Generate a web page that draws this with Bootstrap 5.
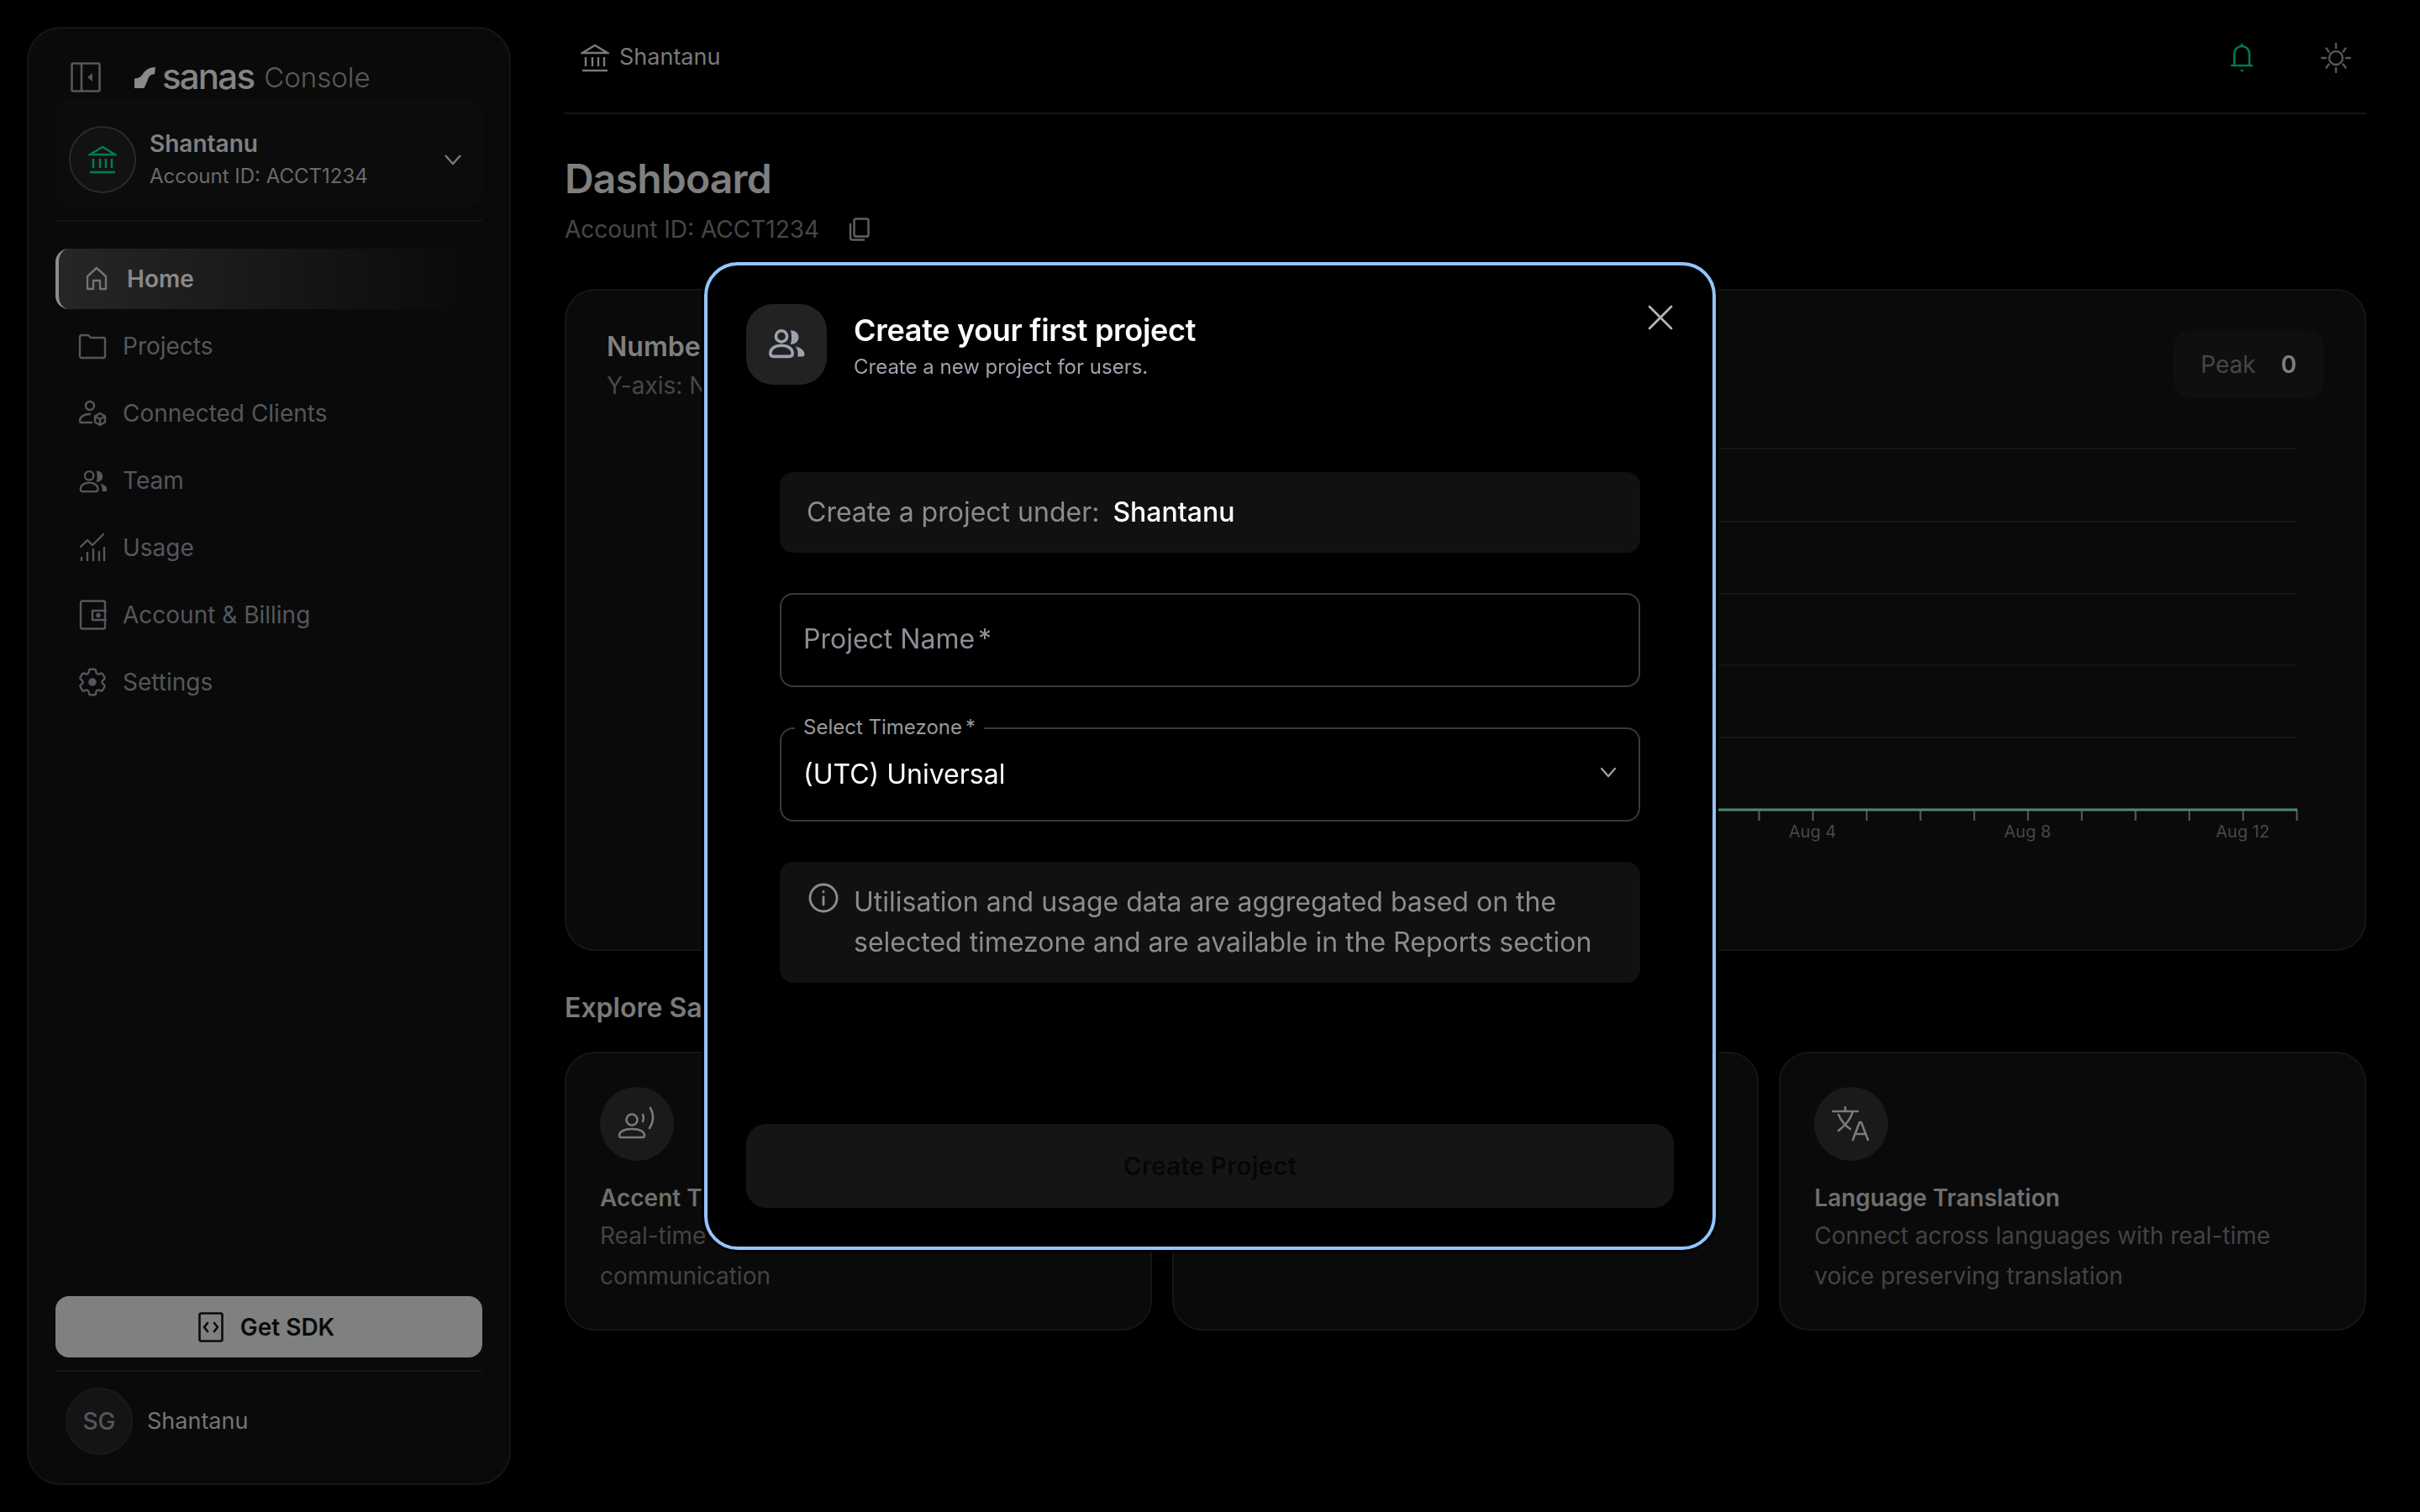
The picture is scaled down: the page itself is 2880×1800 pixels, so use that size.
<!DOCTYPE html>
<html lang="en">
<head>
  <meta charset="UTF-8">
  <title>Dashboard - Sanas Console</title>
  <link href="https://cdn.jsdelivr.net/npm/bootstrap@5.3.0/dist/css/bootstrap.min.css" rel="stylesheet">
  <style>
    body {
      background: #000;
      font-family: Inter, "Liberation Sans", sans-serif;
      color: #808080;
      width: 2880px;
      height: 1800px;
      overflow: hidden;
    }

    svg { display: block; flex: none; fill: none; }

    .sidebar {
      width: 576px;
      height: 1736px;
      margin: 32px 0 0 32px;
      padding: 40px 32px 34px;
      background: #0a0a0a;
      border: 2px solid #151515;
      border-radius: 40px;
      flex: none;
    }
    .side-head { height: 36px; padding-left: 18px; }
    .logo-mark { margin-left: 40px; }
    .logo-word { font-size: 42px; font-weight: 500; letter-spacing: -1.8px; line-height: 36px; color: #858585; margin-left: 8px; margin-top: -2px; }
    .logo-sub { font-size: 33px; font-weight: 300; line-height: 36px; color: #5a5a5a; margin-left: 12px; }
    .acct-box { height: 128px; margin-top: 8px; padding: 16px 16px 0; background: #0c0c0c; border-radius: 16px; }
    .acct-avatar { width: 80px; height: 80px; border: 2px solid #2a2a2a; background: #121212; border-radius: 50%; }
    .acct-name { font-size: 28px; font-weight: 600; line-height: 36px; color: #808080; }
    .acct-id { font-size: 24px; line-height: 36px; color: #6a6a6a; margin-top: 3px; }
    .side-rule { height: 2px; background: #151515; margin: 16px 0 32px; opacity: 1; border: 0; }

    .side-nav { gap: 8px; }
    .side-nav .nav-link {
      height: 72px;
      padding: 0 0 0 27px;
      gap: 19px;
      font-size: 28px;
      font-weight: 400;
      color: #54575d;
    }
    .side-nav .nav-link svg { width: 34px; height: 36px; stroke: #54575d; stroke-width: 2.4; stroke-linecap: round; stroke-linejoin: round; }
    .side-nav .nav-link.active {
      padding-left: 31px;
      gap: 22px;
      font-weight: 600;
      color: #8a8a8a;
      background: linear-gradient(to right, #262626, #0a0a0a 97%);
      border-left: 4px solid #8c8c8c;
      border-radius: 16px;
    }
    .side-nav .nav-link.active svg { width: 28px; height: 30px; stroke: #737373; }
    .side-nav .nav-link .gear { stroke-width: 1.4; }

    .sdk-btn {
      height: 73px;
      padding-right: 18px;
      gap: 20px;
      background: #808080;
      border: 0;
      border-radius: 16px;
      font-size: 28px;
      font-weight: 600;
      color: #0a0a0a;
    }
    .side-rule-2 { height: 2px; background: #151515; margin: 15px 0 19px; opacity: 1; border: 0; }
    .user-row { padding-left: 12px; gap: 17px; }
    .user-avatar { width: 80px; height: 80px; background: #141414; border: 2px solid #1a1a1a; border-radius: 50%; font-size: 28px; font-weight: 500; color: #54575d; }
    .user-name { font-size: 27px; color: #757575; }

    .main { width: 2272px; padding: 0 64px; flex: none; }
    .topbar { height: 136px; border-bottom: 2px solid #151515; padding: 3px 18px 0 19px; }
    .top-icons { gap: 80px; }
    .crumb { gap: 12px; font-size: 27px; color: #7a7a7a; }
    .page-title { font-size: 48px; font-weight: 600; line-height: 58px; letter-spacing: -.8px; color: #7f7f7f; margin: 48px 0 0; }
    .page-sub { font-size: 28px; line-height: 40px; color: #474747; margin-top: 11px; gap: 35px; }

    .panel { background: #0a0a0a; border: 2px solid #151515; border-radius: 36px; }
    .chart-panel { height: 788px; margin-top: 51px; padding: 48px; }
    .chart-title { font-size: 32px; font-weight: 600; line-height: 38px; color: #808080; }
    .chart-sub { font-size: 28px; line-height: 36px; color: #474747; margin-top: 9px; }
    .peak { width: 180px; height: 79px; padding: 0 33px; background: #0f0f0f; border-radius: 20px; font-size: 28px; color: #474747; }
    .peak b { font-weight: 600; color: #808080; }
    .chart { margin-top: 13px; }
    .chart text { font-family: Inter, "Liberation Sans", sans-serif; font-size: 20px; fill: #474747; text-anchor: middle; }

    .explore { font-size: 32px; font-weight: 600; line-height: 40px; color: #7a7a7a; margin: 48px 0 32px; }
    .feature-row { --bs-gutter-x: 24px; --bs-gutter-y: 0; }
    .feature { height: 332px; padding: 40px 40px 0; }
    .feature-icon { width: 88px; height: 88px; background: #1a1a1a; border-radius: 50%; }
    .feature-title { font-size: 28px; font-weight: 600; line-height: 40px; color: #6f6f6f; margin-top: 24px; }
    .feature-text { font-size: 28px; line-height: 48px; color: #434343; margin-top: 1px; }

    .create-modal {
      width: 1204px;
      height: 1176px;
      padding: 46px;
      background: #000;
      border: 4px solid #93c5fd;
      border-radius: 40px;
      box-shadow: 0 0 0 3px #000;
    }
    .tile { width: 96px; height: 96px; background: #222; border-radius: 32px; }
    .head-text { margin-left: 32px; }
    .modal-title-text { font-size: 36px; font-weight: 600; line-height: 44px; letter-spacing: -.3px; color: #fff; margin-top: 9px; }
    .modal-sub { font-size: 24px; line-height: 32px; color: #9ca3af; margin-top: 6px; }
    .modal-x { top: 40px; right: 40px; width: 44px; height: 44px; padding: 0; background: none; border: 0; }
    .modal-body-wrap { margin: 104px 40px 0; }
    .under-box { height: 96px; padding: 0 32px; gap: 16px; background: #111; border-radius: 16px; font-size: 32px; color: #8c8c8c; }
    .under-box b { font-weight: 500; color: #fff; }
    .field { margin-top: 48px; height: 112px; }
    .field .form-control, .field .form-select {
      height: 112px;
      padding: 0 26px;
      background: #000;
      background-image: none;
      border: 2px solid #3a3a3a;
      border-radius: 16px;
      font-size: 32px;
      color: #fff;
      box-shadow: none;
    }
    .field-label { top: 35px; left: 28px; font-size: 32px; line-height: 40px; color: #8b8f97; pointer-events: none; }
    .field-legend { top: -16px; left: 18px; padding: 0 10px; background: #000; font-size: 24px; line-height: 32px; color: #9a9a9a; }
    .req { margin-left: 4px; }
    .field-chev { top: 46px; right: 28px; pointer-events: none; }
    .info-box { height: 144px; margin-top: 48px; padding: 24px 32px 0 34px; gap: 18px; background: #111; border-radius: 16px; font-size: 32px; line-height: 48px; color: #8c8c8c; }
    .info-box svg { margin-top: 1px; }
    .create-btn, .create-btn:disabled {
      height: 100px;
      margin-top: auto;
      background: #151515;
      border: 0;
      border-radius: 24px;
      font-size: 30px;
      font-weight: 600;
      color: #060606;
      opacity: 1;
    }
  </style>
</head>
<body>

<svg width="0" height="0" class="position-absolute">
  <symbol id="bank" viewBox="0 0 34 34">
    <path d="M2 11 17 2l15 9z"/><path d="M6 16v11M14 16v11M21 16v11M28 16v11" /><path d="M2 32h30"/>
  </symbol>
  <symbol id="team" viewBox="0 0 36 30">
    <circle cx="13" cy="7" r="5.5"/>
    <path d="M2 24c0-5 5-8 11-8s11 3 11 8c0 2-1 3-3 3H5c-2 0-3-1-3-3z"/>
    <path d="M22 1c5 0 8 3 8 7s-3 7-8 7c.5-2 1-4 1-7s-.5-5-1-7zM27 17c5 1 9 4 9 8 0 1-1 2-2 2h-5c1-4 0-7-2-10z" fill="currentColor" stroke="none"/>
  </symbol>
</svg>

<div class="d-flex">
  <aside class="sidebar d-flex flex-column">
    <div class="side-head d-flex align-items-center">
      <svg width="36" height="36" viewBox="0 0 36 36" stroke="#54575d" stroke-width="2.6"><rect x="1.5" y="1.5" width="33" height="33" rx="1.5"/><path d="M13 2v32"/><path d="M26 13v10l-6-5z" fill="#54575d" stroke="none"/></svg>
      <svg class="logo-mark" width="25" height="25" viewBox="0 0 24 24"><path d="M0 24V13c6 0 8-3 10-6 3-4 7-7 14-7l-1 8c-5 0-7 3-8 7l-4 9z" fill="#8a8a8a"/></svg>
      <span class="logo-word">sanas</span>
      <span class="logo-sub">Console</span>
    </div>

    <div class="acct-box d-flex align-items-center">
      <div class="acct-avatar d-flex align-items-center justify-content-center">
        <svg width="34" height="34" stroke="#047a4d" stroke-width="2.6"><use href="#bank"/></svg>
      </div>
      <div class="ms-3 flex-grow-1">
        <div class="acct-name">Shantanu</div>
        <div class="acct-id">Account ID: ACCT1234</div>
      </div>
      <svg class="me-2" width="22" height="14" viewBox="0 0 22 14" stroke="#7a7a7a" stroke-width="2.4"><path d="M2 2l9 10 9-10"/></svg>
    </div>
    <hr class="side-rule">

    <nav class="nav flex-column side-nav">
      <a class="nav-link active d-flex align-items-center" href="#">
        <svg viewBox="0 0 28 30"><path d="M3 27V12L14 2l11 10v15h-7V17h-8v10z"/></svg>Home
      </a>
      <a class="nav-link d-flex align-items-center" href="#">
        <svg viewBox="0 0 34 36"><path d="M2 7c0-1 1-2 2-2h8l3 3h15c1 0 2 1 2 2v20c0 1-1 2-2 2H4c-1 0-2-1-2-2z"/></svg>Projects
      </a>
      <a class="nav-link d-flex align-items-center" href="#">
        <svg viewBox="0 0 34 36"><circle cx="14" cy="9" r="5"/><path d="M14 19C7 19 2 22 2 27c0 1 1 2 2 2h12"/><path d="M26 18l6 3.500v7L26 32l-6-3.500v-7zM20 21.500l6 3.500 6-3.500M26 25v7"/></svg>Connected Clients
      </a>
      <a class="nav-link d-flex align-items-center" href="#">
        <svg viewBox="-1 -2 38 34" color="#54575d"><use href="#team"/></svg>Team
      </a>
      <a class="nav-link d-flex align-items-center" href="#">
        <svg viewBox="0 0 34 36"><path d="M3 17l8-8 6 6 13-13"/><path d="M4 33v-3M11 33v-9M18 33v-13M25 33v-10M31 33v-15"/></svg>Usage
      </a>
      <a class="nav-link d-flex align-items-center" href="#">
        <svg viewBox="0 0 34 36"><rect x="3" y="1.500" width="29" height="33" rx="2"/><path d="M33 13H17v11h16"/><circle cx="24" cy="18.500" r="1.600" fill="#54575d"/></svg>Account &amp; Billing
      </a>
      <a class="nav-link d-flex align-items-center" href="#">
        <svg class="gear" viewBox="2 2 20 20"><path d="M9.594 3.94c.09-.542.56-.94 1.11-.94h2.593c.55 0 1.02.398 1.11.94l.213 1.281c.063.374.313.686.645.87.074.04.147.083.22.127.325.196.72.257 1.075.124l1.217-.456a1.125 1.125 0 0 1 1.37.49l1.296 2.247a1.125 1.125 0 0 1-.26 1.431l-1.003.827c-.293.241-.438.613-.43.992a7.723 7.723 0 0 1 0 .255c-.008.378.137.75.43.991l1.004.827c.424.35.534.955.26 1.43l-1.298 2.247a1.125 1.125 0 0 1-1.369.491l-1.217-.456c-.355-.133-.75-.072-1.076.124a6.47 6.47 0 0 1-.22.128c-.331.183-.581.495-.644.869l-.213 1.281c-.09.543-.56.94-1.11.94h-2.594c-.55 0-1.019-.398-1.11-.94l-.213-1.281c-.062-.374-.312-.686-.644-.87a6.52 6.52 0 0 1-.22-.127c-.325-.196-.72-.257-1.076-.124l-1.217.456a1.125 1.125 0 0 1-1.369-.49l-1.297-2.247a1.125 1.125 0 0 1 .26-1.431l1.004-.827c.292-.24.437-.613.43-.991a6.932 6.932 0 0 1 0-.255c.007-.38-.138-.751-.43-.992l-1.004-.827a1.125 1.125 0 0 1-.26-1.43l1.297-2.247a1.125 1.125 0 0 1 1.37-.491l1.216.456c.356.133.751.072 1.076-.124.072-.044.146-.086.22-.128.332-.183.582-.495.644-.869l.214-1.28Z"/><circle cx="12" cy="12" r="2.800" fill="#54575d" stroke="none"/></svg>Settings
      </a>
    </nav>

    <button class="btn sdk-btn mt-auto d-flex align-items-center justify-content-center w-100">
      <svg width="30" height="36" viewBox="0 0 30 36" stroke="#0a0a0a" stroke-width="2.6" stroke-linecap="round" stroke-linejoin="round"><rect x="1.500" y="1.500" width="27" height="33" rx="2"/><path d="M11 13l-4 5 4 5M19 13l4 5-4 5"/></svg>
      Get SDK
    </button>
    <hr class="side-rule-2">
    <div class="user-row d-flex align-items-center">
      <div class="user-avatar d-flex align-items-center justify-content-center">SG</div>
      <span class="user-name">Shantanu</span>
    </div>
  </aside>

  <main class="main">
    <header class="topbar d-flex align-items-center">
      <div class="crumb d-flex align-items-center">
        <svg width="34" height="34" stroke="#7a7a7a" stroke-width="2.400"><use href="#bank"/></svg>
        Shantanu
      </div>
      <div class="top-icons ms-auto d-flex align-items-center">
        <svg width="28" height="36" viewBox="0 0 28 36" stroke="#047a4d" stroke-width="2.600" stroke-linecap="round"><path d="M5 27V13a9 9 0 0 1 18 0v14"/><path d="M2 27h24"/><path d="M14 2v2"/><path d="M11.500 32h5L14 35z" fill="#047a4d" stroke="none"/></svg>
        <svg width="36" height="36" viewBox="0 0 36 36" stroke="#54575d" stroke-width="2.400" stroke-linecap="round"><circle cx="18" cy="18" r="8"/><path d="M18 1v5M18 30v5M1 18h5M30 18h5M6.500 6.500l3 4M29.500 6.500l-3 4M6.500 29.500l3-4M29.500 29.500l-3-4"/></svg>
      </div>
    </header>

    <h1 class="page-title">Dashboard</h1>
    <div class="page-sub d-flex align-items-center">
      <span>Account ID: ACCT1234</span>
      <svg width="26" height="28" viewBox="0 0 26 28" stroke="#5f6166" stroke-width="2.400"><rect x="6.500" y="1.500" width="17" height="21" rx="2"/><path d="M2 7v17c0 1.500 1 2.500 2.500 2.500H19"/></svg>
    </div>

    <section class="panel chart-panel">
      <div class="d-flex justify-content-between align-items-start">
        <div>
          <div class="chart-title">Number of Clients</div>
          <div class="chart-sub">Y-axis: Number</div>
        </div>
        <div class="peak d-flex align-items-center justify-content-between"><span>Peak</span><b>0</b></div>
      </div>
      <svg class="chart" width="2044" height="530" viewBox="0 0 2044 530">
        <g stroke="#151515" stroke-width="2">
          <path d="M180 44H2012M180 131H2012M180 217H2012M180 302H2012M180 388H2012"/>
        </g>
        <g stroke="#5c5c5c" stroke-width="2">
          <path d="M1371.500 474v13M1435.500 474v13M1499.500 474v13M1563.500 474v13M1627.500 474v13M1691.500 474v13M1755.500 474v13M1819.500 474v13M1883.500 474v13M1947.500 474v13M2011.500 474v13"/>
        </g>
        <path d="M1300 474H2012" stroke="#4e8874" stroke-width="3"/>
        <text x="1435" y="507">Aug 4</text>
        <text x="1691" y="507">Aug 8</text>
        <text x="1947" y="507">Aug 12</text>
      </svg>
    </section>

    <h2 class="explore">Explore Sanas Features</h2>
    <div class="row feature-row">
      <div class="col-4">
        <div class="panel feature">
          <div class="feature-icon d-flex align-items-center justify-content-center">
            <svg width="46" height="40" viewBox="0 0 46 40" stroke="#7a7a7a" stroke-width="2.600" stroke-linecap="round"><circle cx="17" cy="15" r="6.500"/><path d="M2 34c0-5 6-8 15-8s15 3 15 8c0 1-1 2-2 2H4c-1 0-2-1-2-2z"/><path d="M30 9c1 2 1 5 0 8M39 1c4 7 4 16-1 24"/></svg>
          </div>
          <div class="feature-title">Accent Translation</div>
          <div class="feature-text">Real-time accent translation for clear<br>communication</div>
        </div>
      </div>
      <div class="col-4">
        <div class="panel feature">
          <div class="feature-icon"></div>
          <div class="feature-title">Noise Cancellation</div>
          <div class="feature-text">Remove background noise from calls</div>
        </div>
      </div>
      <div class="col-4">
        <div class="panel feature">
          <div class="feature-icon d-flex align-items-center justify-content-center">
            <svg width="46" height="42" viewBox="0 0 46 42" stroke="#7a7a7a" stroke-width="2.600" stroke-linecap="round" stroke-linejoin="round"><path d="M1 6h30M16 1v5M25 6c-2 9-8 16-17 23M8 10c3 7 8 13 14 17"/><path d="M25 40l8-21h2l8 21M28 33h12"/></svg>
          </div>
          <div class="feature-title">Language Translation</div>
          <div class="feature-text">Connect across languages with real-time<br>voice preserving translation</div>
        </div>
      </div>
    </div>
  </main>
</div>

<div class="modal-content create-modal position-fixed top-50 start-50 translate-middle d-flex flex-column">
  <button class="modal-x position-absolute" aria-label="Close">
    <svg width="44" height="44" viewBox="0 0 44 44" stroke="#b0b4ba" stroke-width="2.800" stroke-linecap="round"><path d="M9 9l26 26M35 9L9 35"/></svg>
  </button>

  <div class="d-flex">
    <div class="tile d-flex align-items-center justify-content-center">
      <svg width="44" height="36" viewBox="0 0 36 30" stroke="#9ca3af" stroke-width="3" color="#9ca3af"><use href="#team"/></svg>
    </div>
    <div class="head-text">
      <div class="modal-title-text">Create your first project</div>
      <div class="modal-sub">Create a new project for users.</div>
    </div>
  </div>

  <div class="modal-body-wrap">
    <div class="under-box d-flex align-items-center"><span>Create a project under:</span><b>Shantanu</b></div>

    <div class="field position-relative">
      <input type="text" class="form-control" id="projectName">
      <label class="field-label position-absolute" for="projectName">Project Name<span class="req">*</span></label>
    </div>

    <div class="field position-relative">
      <select class="form-select" id="tz"><option>(UTC) Universal</option></select>
      <label class="field-legend position-absolute" for="tz">Select Timezone<span class="req">*</span></label>
      <svg class="field-chev position-absolute" width="20" height="14" viewBox="0 0 20 14" stroke="#a0a0a0" stroke-width="2.200" stroke-linecap="round"><path d="M2 3l8 9 8-9"/></svg>
    </div>

    <div class="info-box d-flex">
      <svg width="36" height="36" viewBox="0 0 36 36" stroke="#8c8c8c" stroke-width="2.800" stroke-linecap="round"><circle cx="18" cy="18" r="16"/><path d="M18 17v9M18 10.500v.5"/></svg>
      <div>Utilisation and usage data are aggregated based on the<br>selected timezone and are available in the Reports section</div>
    </div>
  </div>

  <button class="btn create-btn w-100" disabled>Create Project</button>
</div>

<script src="https://cdn.jsdelivr.net/npm/bootstrap@5.3.0/dist/js/bootstrap.bundle.min.js"></script>
</body>
</html>
